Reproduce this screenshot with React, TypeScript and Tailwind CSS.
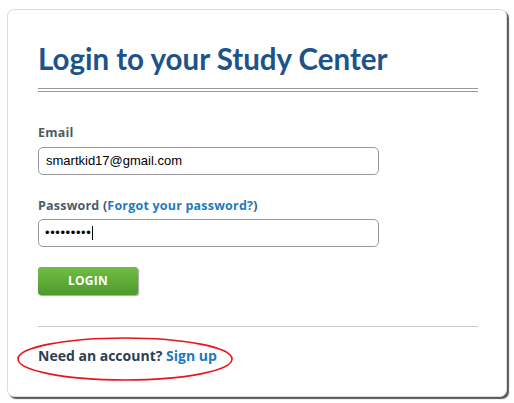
import React from "react";

const sans = { fontFamily: "'Open Sans', 'Noto Sans', sans-serif" };
const arial = { fontFamily: "'Liberation Sans', Arial, sans-serif" };

export default function App() {
  return (
    <div className="w-[514px] h-[403px] bg-white relative overflow-hidden" style={{ fontFamily: "Lato, 'Open Sans', sans-serif" }}>
      <div className="ml-[7px] mt-[9px] w-[500px] h-[388px] bg-white border border-[#dcdcdc] rounded-[7px] shadow-[2px_2px_1px_#5a5a5a] pl-[30px] pr-[28px] pt-[31px]">
        <h1 className="text-[29.5px] leading-[36px] font-bold text-[#1c538b]">Login to your Study Center</h1>
        <div className="mt-[11px] h-[4px] border-t border-b border-[#999999]" />
        <div className="mt-[33px] text-[12.5px] leading-[16px] font-bold text-[#4b5b66] tracking-[0.2px]" style={sans}>Email</div>
        <div className="mt-[6px] w-[341px] h-[28px] rounded-[5px] border border-[#9a9a9a] flex items-center pl-[7px] text-[13px] text-black" style={arial}>
          smartkid17@gmail.com
        </div>
        <div className="mt-[23px] text-[12.5px] leading-[16px] font-bold text-[#4b5b66] tracking-[0.2px]" style={sans}>
          Password (<span className="text-[#1f7bbd]">Forgot your password?</span>)
        </div>
        <div className="mt-[5px] w-[341px] h-[28px] rounded-[5px] border border-[#9a9a9a] flex items-center pl-[6px] text-[13px] text-black" style={arial}>
          <span className="tracking-[0.6px]">•••••••••</span>
          <span className="ml-[1px] w-[1px] h-[14px] bg-black" />
        </div>
        <button className="mt-[20px] w-[100px] h-[28px] rounded-[3px] bg-gradient-to-b from-[#72be44] to-[#4b9a2c] shadow-[1px_1px_1px_rgba(0,0,0,0.35)] text-white text-[12px] font-bold tracking-[0.3px]" style={sans}>
          LOGIN
        </button>
        <div className="mt-[31px] h-px bg-[#c8c8c8]" />
        <div className="mt-[20px] text-[14px] leading-[18px] font-bold text-[#2b3f52]" style={sans}>
          Need an account? <span className="text-[#1b7ac0]">Sign up</span>
        </div>
      </div>
      <svg className="absolute left-[16px] top-[336px]" width="218" height="46" viewBox="0 0 218 46">
        <ellipse cx="109" cy="23" rx="107" ry="21" fill="none" stroke="#e8141c" strokeWidth="1.6" />
      </svg>
    </div>
  );
}
